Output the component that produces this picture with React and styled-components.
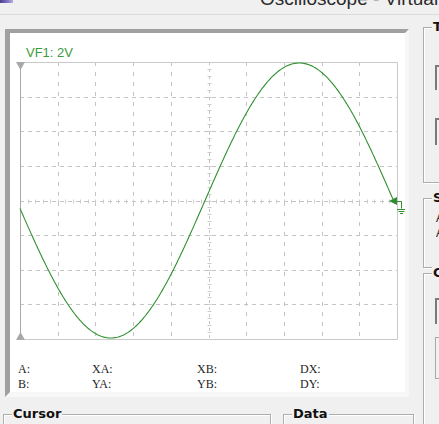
import React from "react";
import styled, { createGlobalStyle } from "styled-components";

const Global = createGlobalStyle`
  html, body { margin: 0; padding: 0; background: #f0f0f0; }
  body { font-family: "Liberation Sans", Arial, sans-serif; }
`;

const Window = styled.div`
  width: 439px;
  height: 424px;
  overflow: hidden;
  background: #f0f0f0;
  display: flex;
  flex-direction: column;
`;

const TitleBar = styled.div`
  height: 14px;
  flex-shrink: 0;
  border-bottom: 1px solid #dcdcdc;
  display: flex;
  align-items: flex-start;
  overflow: hidden;
`;

const AppIcon = styled.div`
  flex-shrink: 0;
  width: 13px;
  height: 3px;
  background: linear-gradient(90deg, #4b3c8f, #8676c9 60%, #b9aee0);
`;

const Title = styled.div`
  flex-shrink: 0;
  margin-left: 247px;
  margin-top: -11px;
  font-size: 19px;
  line-height: 19px;
  color: #2b2b2b;
  white-space: nowrap;
`;

const Main = styled.div`
  flex: 1;
  display: flex;
  min-height: 0;
`;

const LeftCol = styled.div`
  width: 416px;
  flex-shrink: 0;
  padding: 14px 0 0 3px;
  box-sizing: border-box;
  display: flex;
  flex-direction: column;
`;

const ScreenFrame = styled.div`
  margin-left: 2px;
  width: 404px;
  height: 369px;
  box-sizing: border-box;
  border-style: solid;
  border-width: 4px 4px 5px 5px;
  border-color: #a0a0a0 #f7f7f7 #f7f7f7 #a0a0a0;
  background: #ffffff;
  display: flex;
  flex-direction: column;
  padding-top: 13px;
`;

const ChannelLabel = styled.div`
  padding-left: 16px;
  font-size: 13px;
  line-height: 13px;
  color: #3d9b3d;
`;

const Scope = styled.svg`
  display: block;
  width: 395px;
  height: 287px;
`;

const Readouts = styled.div`
  margin-top: 16px;
  padding-left: 8px;
  display: grid;
  grid-template-columns: 74px 105px 103px 1fr;
  grid-auto-rows: 15px;
  font-family: "Liberation Serif", "Times New Roman", serif;
  font-size: 12px;
  line-height: 15px;
  color: #1e1e1e;
`;

const BottomRow = styled.div`
  margin-top: 17px;
  display: flex;
  gap: 12px;
`;

const Group = styled.div`
  position: relative;
  flex-shrink: 0;
  box-sizing: border-box;
  width: ${(p) => p.$w}px;
  height: ${(p) => p.$h}px;
  margin-bottom: ${(p) => p.$mb || 0}px;
  border: 1px solid #adadad;
  box-shadow: inset 1px 1px 0 #ffffff, 1px 1px 0 #ffffff;
`;

const Legend = styled.span`
  position: absolute;
  top: -9px;
  left: 8px;
  padding: 0 1px;
  background: #f0f0f0;
  font-family: "DejaVu Sans", "Liberation Sans", sans-serif;
  font-weight: bold;
  font-size: 13px;
  line-height: 16px;
  color: #111;
  white-space: nowrap;
`;

const RightCol = styled.div`
  margin-left: 7px;
  padding-top: 12px;
  display: flex;
  flex-direction: column;
`;

const Inner = styled.div`
  position: absolute;
  left: 11px;
  top: ${(p) => p.$top}px;
  width: 80px;
  height: ${(p) => p.$h}px;
  box-sizing: border-box;
  border-style: solid;
  border-width: ${(p) => (p.$sunken ? "2px 0 0 2px" : "1px")};
  border-color: ${(p) => (p.$sunken ? "#7a7a7a" : "#a8a8a8")};
  background: ${(p) => (p.$sunken ? "#f0f0f0" : "transparent")};
`;

const SmallText = styled.div`
  position: absolute;
  left: 12px;
  top: ${(p) => p.$top}px;
  font-size: 12px;
  line-height: 13px;
  color: #222;
  white-space: nowrap;
`;

const OX = 10;
const OY = 59;
const GX = 20 - OX;
const GY = 62 - OY;
const GW = 377;
const GH = 277;

function Grid() {
  const els = [];
  const dx = GW / 10;
  const dy = GH / 8;
  for (let i = 1; i < 10; i++) {
    const x = Math.round(GX + i * dx) + 0.5;
    if (i === 5) {
      els.push(
        <line key={"vc"} x1={x} y1={GY} x2={x} y2={GY + GH} stroke="#c4c4c4" strokeDasharray="3 4" />
      );
      for (let k = 1; k < 40; k++) {
        const y = Math.round(GY + (k * dy) / 5) + 0.5;
        els.push(<line key={"vt" + k} x1={x - 2} y1={y} x2={x + 2} y2={y} stroke="#cdcdcd" />);
      }
    } else {
      els.push(
        <line key={"v" + i} x1={x} y1={GY} x2={x} y2={GY + GH} stroke="#c4c4c4" strokeDasharray="4 6" />
      );
    }
  }
  for (let j = 1; j < 8; j++) {
    const y = Math.round(GY + j * dy) + 0.5;
    if (j === 4) {
      els.push(
        <line key={"hc"} x1={GX} y1={y} x2={GX + GW} y2={y} stroke="#c4c4c4" strokeDasharray="4 4" />
      );
      for (let k = 1; k < 50; k++) {
        const x = Math.round(GX + (k * dx) / 5) + 0.5;
        els.push(<line key={"ht" + k} x1={x} y1={y - 2} x2={x} y2={y + 2} stroke="#cdcdcd" />);
      }
    } else {
      els.push(
        <line key={"h" + j} x1={GX} y1={y} x2={GX + GW} y2={y} stroke="#c4c4c4" strokeDasharray="4 4" />
      );
    }
  }
  return els;
}

function wavePath() {
  let d = "";
  for (let px = 20; px <= 393; px += 1) {
    const py = 200.5 + 137.5 * Math.sin((2 * Math.PI * (px - 20)) / 377 + 0.058);
    d += (px === 20 ? "M" : "L") + (px - OX) + " " + (py - OY).toFixed(2) + " ";
  }
  return d;
}

const green = "#2f8f2f";

export default function App() {
  const t = (x, y) => `${x - OX},${y - OY}`;
  return (
    <>
      <Global />
      <Window>
        <TitleBar>
          <AppIcon />
          <Title>Oscilloscope - Virtual Instrument</Title>
        </TitleBar>
        <Main>
          <LeftCol>
            <ScreenFrame>
              <ChannelLabel>VF1: 2V</ChannelLabel>
              <Scope viewBox="0 0 395 287">
                <Grid />
                <polyline
                  points={`${GX + 0.5},${GY + 0.5} ${GX + GW + 0.5},${GY + 0.5} ${GX + GW + 0.5},${GY + GH + 0.5} ${GX + 0.5},${GY + GH + 0.5}`}
                  fill="none"
                  stroke="#cacaca"
                />
                <line x1={GX + 0.5} y1={GY} x2={GX + 0.5} y2={GY + GH + 1} stroke="#a8a8a8" />
                <polygon points={`${GX - 4},${GY} ${GX + 5},${GY} ${GX + 0.5},${GY + 8}`} fill="#a8a8a8" />
                <polygon points={`${GX - 4},${GY + GH + 1} ${GX + 5},${GY + GH + 1} ${GX + 0.5},${GY + GH - 7}`} fill="#a8a8a8" />
                <path d={wavePath()} fill="none" stroke={green} strokeWidth="1.1" />
                <polygon points={`${t(389, 201)} ${t(397, 197)} ${t(397, 205)}`} fill={green} />
                <g stroke={green} strokeWidth="1" fill="none">
                  <polyline points={`${t(397, 201.5)} ${t(401.5, 201.5)} ${t(401.5, 208.5)}`} />
                  <line x1={397 - OX} y1={209.5 - OY} x2={406 - OX} y2={209.5 - OY} />
                  <line x1={398.5 - OX} y1={211.5 - OY} x2={404.5 - OX} y2={211.5 - OY} />
                  <line x1={400 - OX} y1={213.5 - OY} x2={403 - OX} y2={213.5 - OY} />
                </g>
              </Scope>
              <Readouts>
                <span>A:</span>
                <span>XA:</span>
                <span>XB:</span>
                <span>DX:</span>
                <span>B:</span>
                <span>YA:</span>
                <span>YB:</span>
                <span>DY:</span>
              </Readouts>
            </ScreenFrame>
            <BottomRow>
              <Group $w={268} $h={60}>
                <Legend>Cursor</Legend>
              </Group>
              <Group $w={131} $h={60}>
                <Legend>Data</Legend>
              </Group>
            </BottomRow>
          </LeftCol>
          <RightCol>
            <Group $w={70} $h={156} $mb={15}>
              <Legend>Timebase</Legend>
              <Inner $sunken $top={37} $h={25} />
              <Inner $sunken $top={90} $h={27} />
            </Group>
            <Group $w={70} $h={70} $mb={5}>
              <Legend>Scale</Legend>
              <SmallText $top={13}>Auto</SmallText>
              <SmallText $top={28}>Auto</SmallText>
            </Group>
            <Group $w={70} $h={200}>
              <Legend>Channel</Legend>
              <Inner $sunken $top={24} $h={26} />
              <Inner $top={63} $h={42} />
            </Group>
          </RightCol>
        </Main>
      </Window>
    </>
  );
}
